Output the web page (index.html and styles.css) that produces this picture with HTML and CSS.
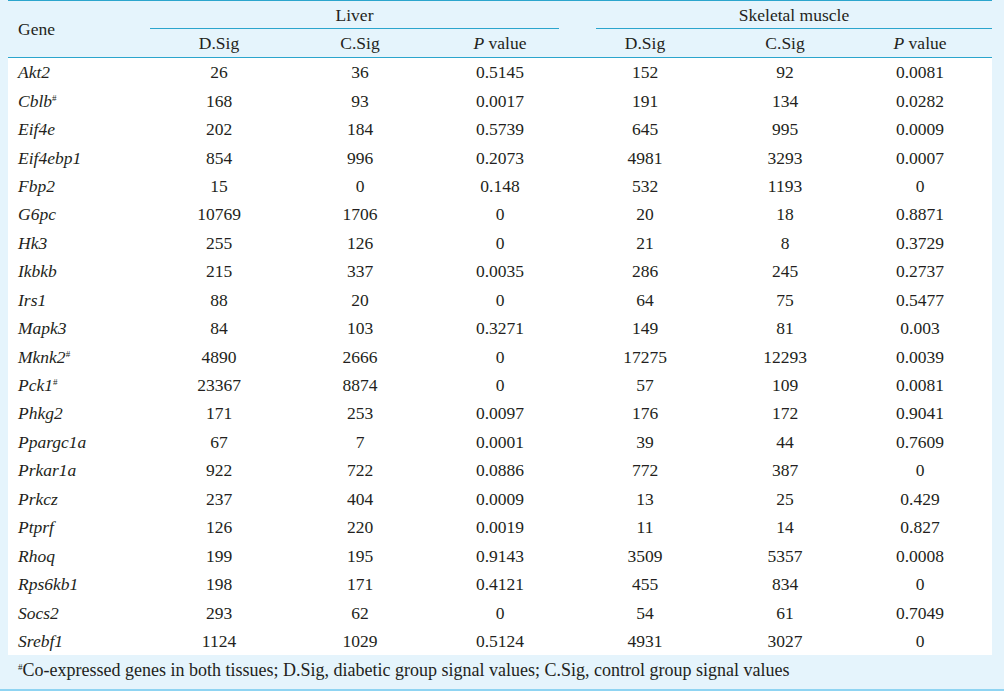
FILE: index.html
```html
<!DOCTYPE html>
<html>
<head>
<meta charset="utf-8">
<link rel="stylesheet" href="styles.css">
</head>
<body>
<div class="page">
  <table class="data">
    <colgroup>
      <col class="c-gene"><col class="c1"><col class="c2"><col class="c3"><col class="c4"><col class="c5"><col class="c6">
    </colgroup>
    <thead>
      <tr class="h1">
        <th rowspan="2" class="gene-h">Gene</th>
        <th colspan="3" class="grp grp-liver"><span>Liver</span></th>
        <th colspan="3" class="grp grp-muscle"><span>Skeletal muscle</span></th>
      </tr>
      <tr class="h2">
        <th>D.Sig</th><th>C.Sig</th><th><i>P</i> value</th>
        <th>D.Sig</th><th>C.Sig</th><th><i>P</i> value</th>
      </tr>
    </thead>
    <tbody>
      <tr><td>Akt2</td><td>26</td><td>36</td><td>0.5145</td><td>152</td><td>92</td><td>0.0081</td></tr>
      <tr><td>Cblb<sup>#</sup></td><td>168</td><td>93</td><td>0.0017</td><td>191</td><td>134</td><td>0.0282</td></tr>
      <tr><td>Eif4e</td><td>202</td><td>184</td><td>0.5739</td><td>645</td><td>995</td><td>0.0009</td></tr>
      <tr><td>Eif4ebp1</td><td>854</td><td>996</td><td>0.2073</td><td>4981</td><td>3293</td><td>0.0007</td></tr>
      <tr><td>Fbp2</td><td>15</td><td>0</td><td>0.148</td><td>532</td><td>1193</td><td>0</td></tr>
      <tr><td>G6pc</td><td>10769</td><td>1706</td><td>0</td><td>20</td><td>18</td><td>0.8871</td></tr>
      <tr><td>Hk3</td><td>255</td><td>126</td><td>0</td><td>21</td><td>8</td><td>0.3729</td></tr>
      <tr><td>Ikbkb</td><td>215</td><td>337</td><td>0.0035</td><td>286</td><td>245</td><td>0.2737</td></tr>
      <tr><td>Irs1</td><td>88</td><td>20</td><td>0</td><td>64</td><td>75</td><td>0.5477</td></tr>
      <tr><td>Mapk3</td><td>84</td><td>103</td><td>0.3271</td><td>149</td><td>81</td><td>0.003</td></tr>
      <tr><td>Mknk2<sup>#</sup></td><td>4890</td><td>2666</td><td>0</td><td>17275</td><td>12293</td><td>0.0039</td></tr>
      <tr><td>Pck1<sup>#</sup></td><td>23367</td><td>8874</td><td>0</td><td>57</td><td>109</td><td>0.0081</td></tr>
      <tr><td>Phkg2</td><td>171</td><td>253</td><td>0.0097</td><td>176</td><td>172</td><td>0.9041</td></tr>
      <tr><td>Ppargc1a</td><td>67</td><td>7</td><td>0.0001</td><td>39</td><td>44</td><td>0.7609</td></tr>
      <tr><td>Prkar1a</td><td>922</td><td>722</td><td>0.0886</td><td>772</td><td>387</td><td>0</td></tr>
      <tr><td>Prkcz</td><td>237</td><td>404</td><td>0.0009</td><td>13</td><td>25</td><td>0.429</td></tr>
      <tr><td>Ptprf</td><td>126</td><td>220</td><td>0.0019</td><td>11</td><td>14</td><td>0.827</td></tr>
      <tr><td>Rhoq</td><td>199</td><td>195</td><td>0.9143</td><td>3509</td><td>5357</td><td>0.0008</td></tr>
      <tr><td>Rps6kb1</td><td>198</td><td>171</td><td>0.4121</td><td>455</td><td>834</td><td>0</td></tr>
      <tr><td>Socs2</td><td>293</td><td>62</td><td>0</td><td>54</td><td>61</td><td>0.7049</td></tr>
      <tr><td>Srebf1</td><td>1124</td><td>1029</td><td>0.5124</td><td>4931</td><td>3027</td><td>0</td></tr>
    </tbody>
  </table>
  <p class="note"><sup>#</sup>Co-expressed genes in both tissues; D.Sig, diabetic group signal values; C.Sig, control group signal values</p>
</div>
</body>
</html>
```

FILE: styles.css
```css
html, body {
  margin: 0;
  padding: 0;
  background: #e5f4fc;
}
.page {
  width: 1004px;
  height: 691px;
  box-sizing: border-box;
  background: #e5f4fc;
  border-bottom: 2px solid #8fd4f2;
  font-family: "Liberation Serif", "DejaVu Serif", serif;
  color: #231f20;
  padding: 0 12px 0 8px;
}
.data, .data th, .data td {
  font-family: "Liberation Serif", "DejaVu Serif", serif;
  font-size: 17.5px;
  color: #231f20;
}
.data {
  width: 984px;
  border-collapse: collapse;
  table-layout: fixed;
  border-top: 1.5px solid #2ba5cd;
}
.c-gene { width: 142px; }
.c1 { width: 138px; }
.c2 { width: 144px; }
.c3 { width: 136px; }
.c4 { width: 154px; }
.c5 { width: 126px; }
.c6 { width: 144px; }

thead { background: #e5f4fc; }
.data th {
  font-weight: normal;
  text-align: center;
  padding: 0;
}
.data th.gene-h {
  text-align: left;
  padding-left: 10px;
  border-bottom: 1.5px solid #2ba5cd;
  vertical-align: middle;
}
.h1 th { height: 28px; }
.h2 th {
  height: 28px;
  border-bottom: 1.5px solid #2ba5cd;
}
.grp span {
  display: block;
  height: 27px;
  line-height: 28px;
  border-bottom: 1.5px solid #2ba5cd;
}
.grp-liver span { margin-right: 9px; }
.grp-muscle span { margin-left: 28px; }

tbody { background: #ffffff; }
.data td {
  height: 28.45px;
  padding: 0;
  text-align: center;
  line-height: 20px;
}
.data td:first-child {
  text-align: left;
  padding-left: 10px;
  font-style: italic;
}
.data sup, .note sup {
  font-size: 9px;
  vertical-align: 6px;
  line-height: 0;
  font-style: normal;
}
.note {
  margin: 0;
  padding: 4px 0 0 10px;
  font-size: 18px;
  line-height: 22px;
}
```
